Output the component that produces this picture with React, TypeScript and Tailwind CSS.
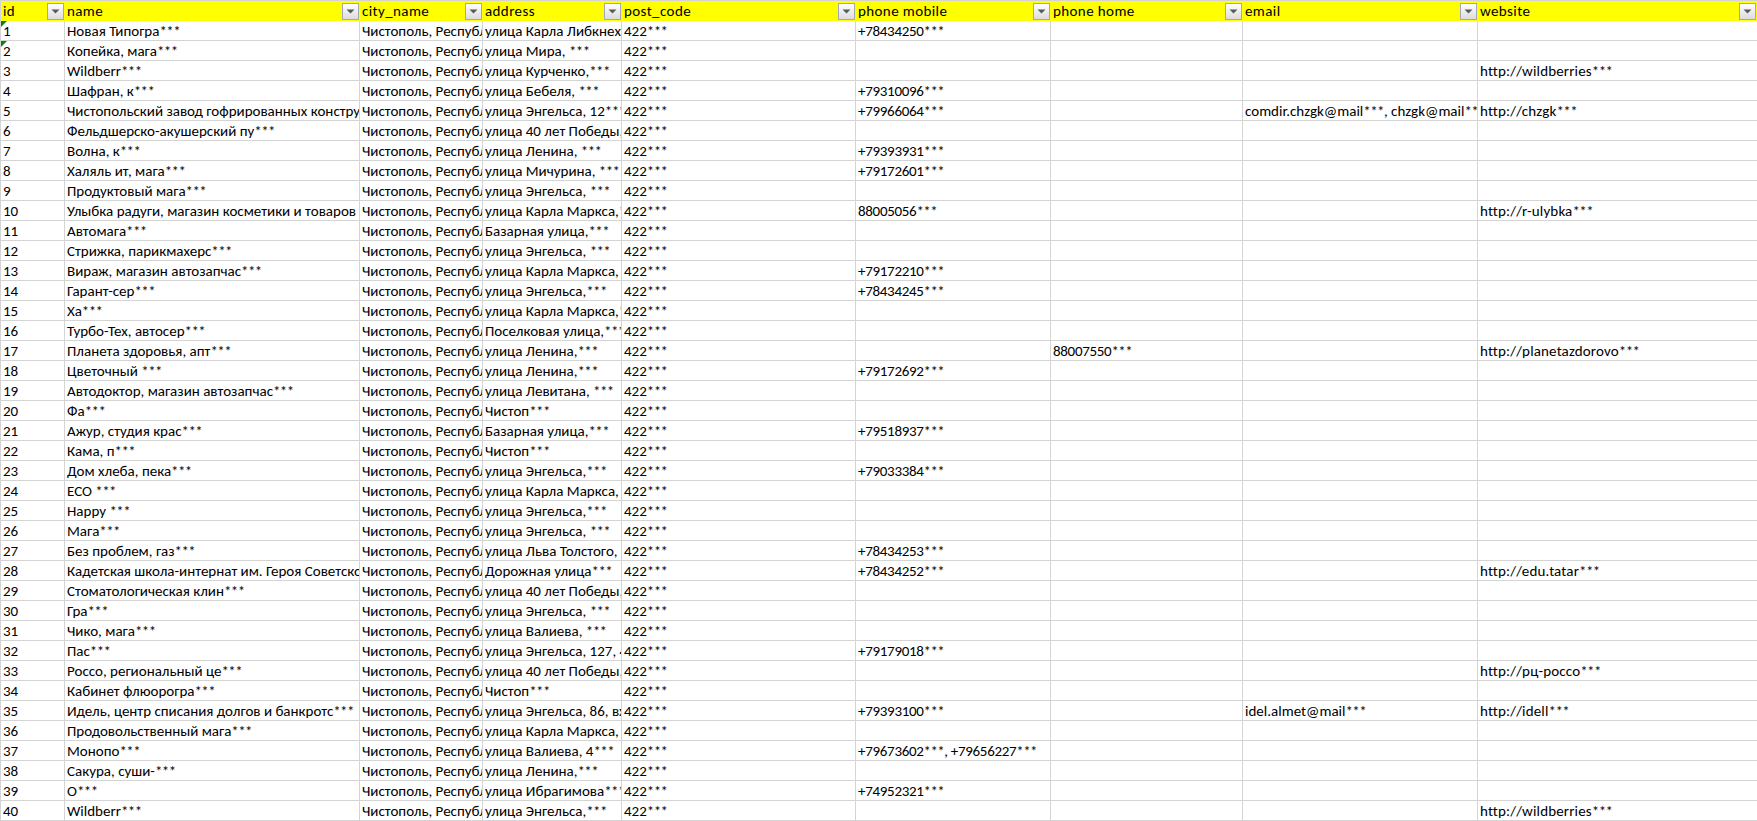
const columns = ['id', 'name', 'city_name', 'address', 'post_code', 'phone mobile', 'phone home', 'email', 'website'];

const CITY = 'Чистополь, Республика Татарстан***';
const grid = 'grid grid-cols-[64px_295px_123px_139px_234px_195px_192px_235px_279px]';

// id is the position in the list: name, address, mobile, home, email, website
type Row = [string, string, string?, string?, string?, string?];

const rows: Row[] = [
  ['Новая Типогра***', 'улица Карла Либкнехта, ***', '+78434250***'],
  ['Копейка, мага***', 'улица Мира, ***'],
  ['Wildberr***', 'улица Курченко,***', '', '', '', 'http://wildberries***'],
  ['Шафран, к***', 'улица Бебеля, ***', '+79310096***'],
  ['Чистопольский завод гофрированных конструкций***', 'улица Энгельса, 12***', '+79966064***', '', 'comdir.chzgk@mail***, chzgk@mail***', 'http://chzgk***'],
  ['Фельдшерско-акушерский пу***', 'улица 40 лет Победы, ***'],
  ['Волна, к***', 'улица Ленина, ***', '+79393931***'],
  ['Халяль ит, мага***', 'улица Мичурина, ***', '+79172601***'],
  ['Продуктовый мага***', 'улица Энгельса, ***'],
  ['Улыбка радуги, магазин косметики и товаров для дома***', 'улица Карла Маркса,***', '88005056***', '', '', 'http://r-ulybka***'],
  ['Автомага***', 'Базарная улица,***'],
  ['Стрижка, парикмахерс***', 'улица Энгельса, ***'],
  ['Вираж, магазин автозапчас***', 'улица Карла Маркса, ***', '+79172210***'],
  ['Гарант-сер***', 'улица Энгельса,***', '+78434245***'],
  ['Ха***', 'улица Карла Маркса,***'],
  ['Турбо-Тех, автосер***', 'Поселковая улица,***'],
  ['Планета здоровья, апт***', 'улица Ленина,***', '', '88007550***', '', 'http://planetazdorovo***'],
  ['Цветочный ***', 'улица Ленина,***', '+79172692***'],
  ['Автодоктор, магазин автозапчас***', 'улица Левитана, ***'],
  ['Фа***', 'Чистоп***'],
  ['Ажур, студия крас***', 'Базарная улица,***', '+79518937***'],
  ['Кама, п***', 'Чистоп***'],
  ['Дом хлеба, пека***', 'улица Энгельса,***', '+79033384***'],
  ['ECO ***', 'улица Карла Маркса, ***'],
  ['Happy ***', 'улица Энгельса,***'],
  ['Мага***', 'улица Энгельса, ***'],
  ['Без проблем, газ***', 'улица Льва Толстого, ***', '+78434253***'],
  ['Кадетская школа-интернат им. Героя Советского Союза***', 'Дорожная улица***', '+78434252***', '', '', 'http://edu.tatar***'],
  ['Стоматологическая клин***', 'улица 40 лет Победы, ***'],
  ['Гра***', 'улица Энгельса, ***'],
  ['Чико, мага***', 'улица Валиева, ***'],
  ['Пас***', 'улица Энгельса, 127, 4***', '+79179018***'],
  ['Россо, региональный це***', 'улица 40 лет Победы, ***', '', '', '', 'http://рц-россо***'],
  ['Кабинет флюорогра***', 'Чистоп***'],
  ['Идель, центр списания долгов и банкротс***', 'улица Энгельса, 86, вход***', '+79393100***', '', 'idel.almet@mail***', 'http://idell***'],
  ['Продовольственный мага***', 'улица Карла Маркса, ***'],
  ['Монопо***', 'улица Валиева, 4***', '+79673602***, +79656227***'],
  ['Сакура, суши-***', 'улица Ленина,***'],
  ['О***', 'улица Ибрагимова***', '+74952321***'],
  ['Wildberr***', 'улица Энгельса,***', '', '', '', 'http://wildberries***'],
];

function FilterButton() {
  return (
    <span className="flex items-center justify-center w-[17px] h-[17px] shrink-0 border border-[#a3a8b3] bg-gradient-to-b from-white to-[#dcdcdc]">
      <svg width="9" height="5" viewBox="0 0 9 5">
        <path d="M0.5 0.5 H8.5 L4.5 4.5 Z" fill="#5a5a5a" />
      </svg>
    </span>
  );
}

// the masked stars sit closer together than the font sets them
function Masked({ text }: { text?: string }) {
  if (!text) return null;
  return (
    <>
      {text.split(/(\*\*\*)/).map((part, i) =>
        part === '***' ? (
          <span key={i} className="tracking-[-0.6px]">{part}</span>
        ) : (
          part
        ),
      )}
    </>
  );
}

function Cell({ text, className = 'border-r' }: { text?: string; className?: string }) {
  return (
    <div className={`pl-[2px] h-5 leading-[21px] overflow-hidden whitespace-nowrap border-b border-[#d4d4d4] ${className}`}>
      <Masked text={text} />
    </div>
  );
}

export default function App() {
  return (
    <div className="w-[1757px] h-[821px] overflow-hidden bg-white text-black border-l border-t border-[#d4d4d4] font-[Calibri,Carlito,Lato,sans-serif] text-[15px]">
      <div className={`${grid} h-5 bg-[#ffff00]`}>
        {columns.map((col) => (
          <div key={col} className="flex items-center justify-between pl-[2px] pr-[1px] h-5 leading-[21px] overflow-hidden">
            <span className="whitespace-nowrap tracking-[0.4px]">{col}</span>
            <FilterButton />
          </div>
        ))}
      </div>

      {rows.map((row, i) => (
        <div key={i} className={grid}>
          <div className="relative">
            {i < 2 && <span className="absolute top-0 left-0 w-0 h-0 border-t-[6px] border-r-[6px] border-t-[#107c10] border-r-transparent" />}
            <Cell text={String(i + 1)} />
          </div>
          <Cell text={row[0]} />
          <Cell text={CITY} />
          <Cell text={row[1]} />
          <Cell text="422***" />
          <Cell text={row[2]} className="border-r tracking-[-0.3px]" />
          <Cell text={row[3]} className="border-r tracking-[-0.3px]" />
          <Cell text={row[4]} />
          <Cell text={row[5]} className="tracking-[0.15px]" />
        </div>
      ))}
    </div>
  );
}
